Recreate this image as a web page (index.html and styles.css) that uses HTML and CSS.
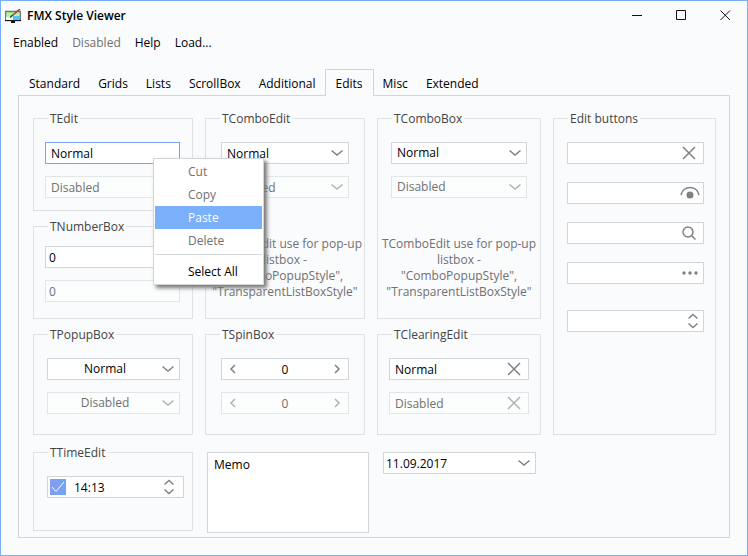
FILE: index.html
```html
<!DOCTYPE html>
<html lang="en">
<head>
	<meta charset="UTF-8">
	<title>FMX Style Viewer</title>
	<link rel="stylesheet" href="styles.css">
</head>
<body>
	<svg class="defs" width="0" height="0" aria-hidden="true">
		<symbol id="down" viewBox="0 0 12 12"><path d="M0.5 3.5L6 8L11.5 3.5"/></symbol>
		<symbol id="left" viewBox="0 0 12 12"><path d="M8 2L4 6L8 10"/></symbol>
		<symbol id="right" viewBox="0 0 12 12"><path d="M4 2L8 6L4 10"/></symbol>
		<symbol id="cross" viewBox="0 0 14 14"><path d="M1 1L13 13M13 1L1 13"/></symbol>
		<symbol id="updown" viewBox="0 0 10 16"><path d="M0.5 5.5L5 1.5L9.5 5.5M0.5 10.5L5 14.5L9.5 10.5"/></symbol>
	</svg>
	<div class="window">
		<header class="titlebar">
			<svg class="logo" width="16" height="14" viewBox="0 0 16 14" aria-hidden="true">
				<rect x="0.5" y="2.5" width="15" height="9" fill="#b4f59c" stroke="#70787c"/>
				<path d="M8 7H15V11H8Z" fill="#48c8f8"/>
				<path d="M1 8L8 7V11H1Z" fill="#f4fbf4"/>
				<path d="M0 11H16V12H10V14H6V12H0Z" fill="#15181c"/>
				<path d="M5 8.500L8.500 5.500" stroke="#2c4c28" stroke-width="1.6"/>
				<path d="M8.500 5.500L15 0" stroke="#b8343c" stroke-width="1.6"/>
			</svg>
			<h1>FMX Style Viewer</h1>
			<div class="caption">
				<button aria-label="Minimize"><svg width="11" height="11"><path d="M0 5.5H10"/></svg></button>
				<button aria-label="Maximize"><svg width="11" height="11"><path d="M0.5 0.5H9.5V9.5H0.5Z"/></svg></button>
				<button aria-label="Close"><svg width="11" height="11"><path d="M0.5 0.5L10 10M10 0.5L0.5 10"/></svg></button>
			</div>
		</header>
		<nav class="menubar">
			<button>Enabled</button>
			<button disabled>Disabled</button>
			<button>Help</button>
			<button>Load...</button>
		</nav>
		<div class="tabs" role="tablist">
			<button role="tab">Standard</button>
			<button role="tab">Grids</button>
			<button role="tab">Lists</button>
			<button role="tab">ScrollBox</button>
			<button role="tab">Additional</button>
			<button role="tab" class="active" aria-selected="true">Edits</button>
			<button role="tab">Misc</button>
			<button role="tab">Extended</button>
		</div>
		<main class="page">
			<div class="groups">
				<fieldset class="group">
					<legend>TEdit</legend>
					<div class="fields edit">
						<div class="field focused"><input type="text" value="Normal" aria-label="Edit"></div>
						<div class="field off"><input type="text" value="Disabled" aria-label="Disabled edit" disabled></div>
						<div class="popup" role="menu">
							<button role="menuitem" disabled>Cut</button>
							<button role="menuitem" disabled>Copy</button>
							<button role="menuitem" class="hot">Paste</button>
							<button role="menuitem" disabled>Delete</button>
							<hr>
							<button role="menuitem">Select All</button>
						</div>
					</div>
				</fieldset>
				<fieldset class="group tall">
					<legend>TComboEdit</legend>
					<div class="fields comboedit">
						<div class="field"><input type="text" value="Normal" aria-label="Combo edit"><svg class="icon" width="12" height="12"><use href="#down"/></svg></div>
						<div class="field off"><input type="text" value="Disabled" aria-label="Disabled combo edit" disabled><svg class="icon" width="12" height="12"><use href="#down"/></svg></div>
					</div>
					<p class="note">TComboEdit use for pop-up<br>listbox -<br>"ComboPopupStyle",<br>"TransparentListBoxStyle"</p>
				</fieldset>
				<fieldset class="group tall">
					<legend>TComboBox</legend>
					<div class="fields combobox">
						<div class="field"><select aria-label="Combo box"><option>Normal</option></select><svg class="icon" width="12" height="12"><use href="#down"/></svg></div>
						<div class="field off"><select aria-label="Disabled combo box" disabled><option>Disabled</option></select><svg class="icon" width="12" height="12"><use href="#down"/></svg></div>
					</div>
					<p class="note">TComboEdit use for pop-up<br>listbox -<br>"ComboPopupStyle",<br>"TransparentListBoxStyle"</p>
				</fieldset>
				<fieldset class="group full">
					<legend>Edit buttons</legend>
					<div class="fields buttons">
						<div class="field"><input type="text" aria-label="Clear edit"><button class="icon" aria-label="Clear"><svg width="14" height="14"><use href="#cross"/></svg></button></div>
						<div class="field"><input type="text" aria-label="Password edit"><button class="icon eye" aria-label="Show password"><svg width="20" height="14" viewBox="0 0 20 14"><path d="M1 9C2 4 6 1.5 10 1.5S18 4 19 9"/><circle cx="10" cy="9" r="3.5"/></svg></button></div>
						<div class="field"><input type="text" aria-label="Search edit"><button class="icon" aria-label="Search"><svg width="14" height="14" viewBox="0 0 14 14"><circle cx="6" cy="6" r="5"/><path d="M9.500 9.500L13.500 13.500"/></svg></button></div>
						<div class="field"><input type="text" aria-label="Ellipses edit"><button class="icon dots" aria-label="Browse"><svg width="16" height="4" viewBox="0 0 16 4"><circle cx="2" cy="2" r="1.7"/><circle cx="8" cy="2" r="1.7"/><circle cx="14" cy="2" r="1.7"/></svg></button></div>
						<div class="field last"><input type="text" aria-label="Spin edit"><button class="icon spin" aria-label="Step"><svg width="10" height="16"><use href="#updown"/></svg></button></div>
					</div>
				</fieldset>
				<fieldset class="group">
					<legend>TNumberBox</legend>
					<div class="fields number">
						<div class="field"><input type="text" value="0" aria-label="Number"></div>
						<div class="field off"><input type="text" value="0" aria-label="Disabled number" disabled></div>
					</div>
				</fieldset>
				<fieldset class="group">
					<legend>TPopupBox</legend>
					<div class="fields popupbox">
						<div class="field"><select aria-label="Popup box"><option>Normal</option></select><svg class="icon" width="12" height="12"><use href="#down"/></svg></div>
						<div class="field off"><select aria-label="Disabled popup box" disabled><option>Disabled</option></select><svg class="icon" width="12" height="12"><use href="#down"/></svg></div>
					</div>
				</fieldset>
				<fieldset class="group">
					<legend>TSpinBox</legend>
					<div class="fields spinbox">
						<div class="field"><button class="icon" aria-label="Less"><svg width="12" height="12"><use href="#left"/></svg></button><input type="text" value="0" aria-label="Spin box"><button class="icon" aria-label="More"><svg width="12" height="12"><use href="#right"/></svg></button></div>
						<div class="field off"><button class="icon" aria-label="Less" disabled><svg width="12" height="12"><use href="#left"/></svg></button><input type="text" value="0" aria-label="Disabled spin box" disabled><button class="icon" aria-label="More" disabled><svg width="12" height="12"><use href="#right"/></svg></button></div>
					</div>
				</fieldset>
				<fieldset class="group">
					<legend>TClearingEdit</legend>
					<div class="fields clearing">
						<div class="field"><input type="text" value="Normal" aria-label="Clearing edit"><button class="icon" aria-label="Clear"><svg width="14" height="14"><use href="#cross"/></svg></button></div>
						<div class="field off"><input type="text" value="Disabled" aria-label="Disabled clearing edit" disabled><button class="icon" aria-label="Clear" disabled><svg width="14" height="14"><use href="#cross"/></svg></button></div>
					</div>
				</fieldset>
			</div>
			<div class="bottom">
				<fieldset class="group">
					<legend>TTimeEdit</legend>
					<div class="fields time">
						<div class="field"><input type="checkbox" aria-label="Use time" checked><input type="text" value="14:13" aria-label="Time"><button class="icon spin" aria-label="Step"><svg width="10" height="16"><use href="#updown"/></svg></button></div>
					</div>
				</fieldset>
				<textarea class="memo" aria-label="Memo">Memo</textarea>
				<div class="field date"><input type="text" value="11.09.2017" aria-label="Date"><button class="icon" aria-label="Open calendar"><svg width="12" height="12"><use href="#down"/></svg></button></div>
			</div>
		</main>
	</div>
</body>
</html>
```
FILE: styles.css
```css
/* common */
* {
	box-sizing: border-box; margin: 0; padding: 0;
}
body, button, input, select, textarea {
	font-family: "Open Sans", "Noto Sans", sans-serif; font-size: 12px; line-height: 16px; color: #000;
}
button, input, select, textarea {
	border: none; background: none; outline: none; border-radius: 0; appearance: none;
}
svg {
	display: block; fill: none; stroke: #808080; stroke-width: 1.5;
}
.defs {
	position: absolute;
}
.window {
	display: flex; flex-direction: column; min-height: 100vh; border: 1px solid #78adf8; background-color: #fafbfd;
}
/* title */
.titlebar {
	display: flex; align-items: center; height: 29px; padding: 0 11px 0 4px;
}
.titlebar h1 {
	flex: 1; margin-left: 6px; font-size: 12px; font-weight: 600;
}
.logo {
	stroke: none;
}
.caption {
	display: flex; gap: 22px;
}
.caption button {
	padding: 4px 5px 4px 6px;
}
.caption svg {
	stroke: #111; stroke-width: 1;
}
.menubar {
	display: flex; gap: 14px; padding: 5px 12px 4px;
}
.menubar button:disabled {
	color: #707070;
}
/* tabs */
.tabs {
	display: flex; padding: 14px 19px 0; height: 40px;
}
.tabs button {
	height: 26px; padding: 3px 9px 0;
}
.tabs .active {
	position: relative; z-index: 1; height: 27px; border: 1px solid #d2d6d8; border-bottom: none; background-color: #fafbfd; padding: 2px 10px 0;
}
.page {
	flex: 1; margin: 0 17px 17px; border: 1px solid #d2d6d8; padding: 14px 13px 3px 14px;
}
/* groups */
.groups, .bottom {
	display: grid; align-items: start;
}
.groups {
	grid-template-columns: 160fr 160fr 164fr 163fr; gap: 7px 12px;
}
.bottom {
	grid-template-columns: 160fr 162fr 153fr 166fr; column-gap: 14px; margin-top: 9px;
}
.group {
	min-width: 0; border: 1px solid #dee2e4;
}
.groups .group {
	align-self: stretch;
}
.tall {
	grid-row: span 2;
}
.full {
	grid-row: span 3;
}
legend {
	margin-left: 14px; padding: 0 2px; line-height: 17px; color: #444;
}
.fields {
	display: flex; flex-direction: column; gap: 12px;
}
.edit {
	position: relative; padding: 15px 12px 12px 11px;
}
.number {
	padding: 11px 12px 16px 11px;
}
.comboedit {
	padding: 15px 15px 0;
}
.combobox {
	padding: 15px 13px 0;
}
.popupbox {
	padding: 15px 12px 20px 13px;
}
.spinbox {
	padding: 15px 15px 20px;
}
.clearing {
	padding: 15px 11px 20px;
}
.buttons {
	gap: 18px; padding: 15px 11px 0 13px;
}
.time {
	padding: 15px 8px 32px 13px;
}
.note {
	margin-top: 38px; text-align: center; white-space: nowrap; color: #707070;
}
/* fields */
.field {
	display: grid; grid-template-columns: 1fr auto; align-items: center; height: 22px; border: 1px solid #d2d6d8; background-color: #fff;
}
.field input, .field select {
	width: 100%; min-width: 0; height: 20px; padding: 0 5px;
}
.field select {
	grid-area: 1 / 1 / 2 / 3;
}
.field select + .icon {
	grid-area: 1 / 2; pointer-events: none;
}
.field .icon {
	margin-right: 5px;
}
.focused {
	border-color: #78a0f4;
}
.off {
	border-color: #e2e6e8; background-color: #fcfdfd;
}
.off input, .off select {
	color: #707070; opacity: 1;
}
.off svg {
	opacity: 0.6;
}
.number input {
	padding: 0 3px;
}
.popupbox select {
	padding-right: 22px; text-align: center; text-align-last: center;
}
.spinbox .field {
	grid-template-columns: auto 1fr auto;
}
.spinbox .icon {
	margin: 0 5px;
}
.spinbox input {
	text-align: center;
}
.clearing .field .icon, .buttons .field .icon {
	margin-right: 7px;
}
.buttons .field .eye {
	margin-right: 3px;
}
.eye circle, .dots circle {
	fill: #808080; stroke: none;
}
.buttons .field .dots, .buttons .field .spin {
	margin-right: 5px;
}
.last {
	margin-top: 8px;
}
.time .field {
	grid-template-columns: auto 1fr auto;
}
.time input[type="checkbox"] {
	width: 16px; height: 16px; margin: 0 3px 0 2px; padding: 0; background: url("data:image/svg+xml,%3Csvg xmlns='http://www.w3.org/2000/svg' viewBox='0 0 16 16'%3E%3Cpath d='M2 8l4 4.500L14 3' fill='none' stroke='white'/%3E%3C/svg%3E"), linear-gradient(90deg, #859cf2, #70a5f5);
}
.time .field .spin {
	margin-right: 9px;
}
.date {
	margin-top: 8px;
}
.date input {
	padding: 0 2px;
}
.memo {
	height: 81px; margin-top: 8px; border: 1px solid #d2d6d8; background-color: #fff; padding: 4px 6px; resize: none;
}
/* context menu */
.popup {
	position: absolute; z-index: 2; top: 31px; left: 119px; width: 111px; padding: 1px; border: 1px solid #d2d6d8; background-color: #fff; box-shadow: 3px 3px 4px #777;
}
.popup button {
	display: block; width: 100%; height: 23px; padding: 0 0 0 33px; text-align: left;
}
.popup button:disabled {
	color: #707070;
}
.popup .hot {
	background-color: #7aaffa; color: #fff;
}
.popup hr {
	margin: 2px 0 5px; border: none; border-top: 1px solid #d2d6d8;
}
```
